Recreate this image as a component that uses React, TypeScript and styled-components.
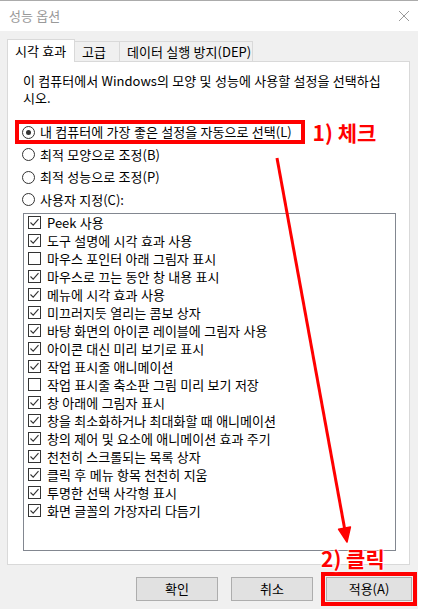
import React from 'react'
import styled, { createGlobalStyle } from 'styled-components'

const effects: { label: string; checked: boolean }[] = [
  { label: 'Peek 사용', checked: true },
  { label: '도구 설명에 시각 효과 사용', checked: true },
  { label: '마우스 포인터 아래 그림자 표시', checked: false },
  { label: '마우스로 끄는 동안 창 내용 표시', checked: true },
  { label: '메뉴에 시각 효과 사용', checked: true },
  { label: '미끄러지듯 열리는 콤보 상자', checked: true },
  { label: '바탕 화면의 아이콘 레이블에 그림자 사용', checked: true },
  { label: '아이콘 대신 미리 보기로 표시', checked: true },
  { label: '작업 표시줄 애니메이션', checked: true },
  { label: '작업 표시줄 축소판 그림 미리 보기 저장', checked: false },
  { label: '창 아래에 그림자 표시', checked: true },
  { label: '창을 최소화하거나 최대화할 때 애니메이션', checked: true },
  { label: '창의 제어 및 요소에 애니메이션 효과 주기', checked: true },
  { label: '천천히 스크롤되는 목록 상자', checked: true },
  { label: '클릭 후 메뉴 항목 천천히 지움', checked: true },
  { label: '투명한 선택 사각형 표시', checked: true },
  { label: '화면 글꼴의 가장자리 다듬기', checked: true },
]

const Radio: React.FC<{ checked?: boolean; marked?: boolean; label: string }> = ({ checked, marked, label }) => (
  <RadioRow $marked={marked}>
    <RadioCircle>{checked && <RadioDot />}</RadioCircle>
    <span>{label}</span>
  </RadioRow>
)

const Check: React.FC<{ checked: boolean; label: string }> = ({ checked, label }) => (
  <CheckRow>
    <CheckBox>
      {checked && (
        <svg width="11" height="11" viewBox="0 0 11 11">
          <path d="M1.5 5.5 L4.2 8.2 L9.5 2.2" fill="none" stroke="#333" strokeWidth="1.1" />
        </svg>
      )}
    </CheckBox>
    <span>{label}</span>
  </CheckRow>
)

const App: React.FC = () => {
  return (
    <>
      <GlobalStyle />
      <Window>
        <TitleBar>
          <Title>성능 옵션</Title>
          <svg width="10" height="10" viewBox="0 0 10 10">
            <path d="M0 0 L10 10 M10 0 L0 10" stroke="#9a9a9a" strokeWidth="1" />
          </svg>
        </TitleBar>
        <Body>
          <TabStrip>
            <Tab $active $width={68}>시각 효과</Tab>
            <Tab $width={46}>고급</Tab>
            <Tab $width={134}>데이터 실행 방지(DEP)</Tab>
          </TabStrip>
          <Panel>
            <Description>
              이 컴퓨터에서 Windows의 모양 및 성능에 사용할 설정을 선택하십
              <br />
              시오.
            </Description>
            <RadioGroup>
              <RadioLine>
                <Radio checked marked label="내 컴퓨터에 가장 좋은 설정을 자동으로 선택(L)" />
                <Note>1) 체크</Note>
              </RadioLine>
              <Radio label="최적 모양으로 조정(B)" />
              <Radio label="최적 성능으로 조정(P)" />
              <Radio label="사용자 지정(C):" />
            </RadioGroup>
            <ListBox>
              {effects.map((item) => (
                <Check key={item.label} checked={item.checked} label={item.label} />
              ))}
            </ListBox>
          </Panel>
          <ButtonRow>
            <Button $width={82}>확인</Button>
            <Button $width={82}>취소</Button>
            <Button $width={86} $marked>적용(A)</Button>
          </ButtonRow>
        </Body>
        <FloatNote>2) 클릭</FloatNote>
        <Arrow width="100" height="400" viewBox="0 0 100 400">
          <line x1="17" y1="7" x2="84.5" y2="377" stroke="#f00" strokeWidth="3" />
          <polygon points="87,391 90.4,376 78.6,378.3" fill="#f00" stroke="#f00" strokeWidth="1.5" strokeLinejoin="round" />
        </Arrow>
      </Window>
    </>
  )
}

const GlobalStyle = createGlobalStyle`
  html, body {
    margin: 0;
    padding: 0;
    background: #fff;
  }
  body {
    font-family: "Noto Sans CJK KR", "Noto Sans", sans-serif;
    font-size: 13px;
    color: #000;
    word-spacing: 0.5px;
  }
`

const Window = styled.div`
  position: relative;
  width: 418px;
  height: 609px;
  box-sizing: border-box;
  border-top: 1px solid #ababab;
  background: #f0f0f0;
  display: flex;
  flex-direction: column;
`

const TitleBar = styled.div`
  height: 30px;
  background: #fff;
  display: flex;
  align-items: center;
  justify-content: space-between;
  padding: 0 9px 0 9px;
`

const Title = styled.span`
  color: #999;
  line-height: 16px;
`

const Body = styled.div`
  padding: 8px 6px 0 7px;
  display: flex;
  flex-direction: column;
`

const TabStrip = styled.div`
  display: flex;
  align-items: flex-end;
  height: 23px;
  margin-bottom: -1px;
  position: relative;
  z-index: 1;
`

const Tab = styled.div<{ $active?: boolean; $width: number }>`
  box-sizing: border-box;
  width: ${(p) => p.$width}px;
  height: ${(p) => (p.$active ? 23 : 20)}px;
  margin-bottom: ${(p) => (p.$active ? 0 : 1)}px;
  margin-left: ${(p) => (p.$active ? 0 : -1)}px;
  padding-left: 7px;
  border: 1px solid #d9d9d9;
  border-bottom: none;
  background: ${(p) => (p.$active ? '#fff' : '#f0f0f0')};
  display: flex;
  align-items: center;
  line-height: 18px;
  white-space: nowrap;

  &:first-child {
    margin-left: 0;
  }
`

const Panel = styled.div`
  box-sizing: border-box;
  width: 403px;
  height: 504px;
  background: #fff;
  border: 1px solid #d9d9d9;
  padding: 10px 0 0 15px;
  display: flex;
  flex-direction: column;
`

const Description = styled.p`
  margin: 0;
  line-height: 17px;
  white-space: nowrap;
`

const RadioGroup = styled.div`
  margin: 17px 0 0 -1px;
  display: flex;
  flex-direction: column;
  gap: 4.67px;
`

const RadioLine = styled.div`
  display: flex;
  align-items: center;
`

const RadioRow = styled.div<{ $marked?: boolean }>`
  display: flex;
  align-items: center;
  width: fit-content;
  height: 18px;
  line-height: 18px;
  white-space: nowrap;
  ${(p) =>
    p.$marked &&
    `
    margin-left: -4px;
    padding: 0 10px 0 4px;
    outline: 4px solid #f00;
    outline-offset: -1px;
  `}
`

const RadioCircle = styled.span`
  box-sizing: border-box;
  width: 13px;
  height: 13px;
  border: 1px solid #333;
  border-radius: 50%;
  background: #fff;
  margin-right: 5px;
  display: flex;
  align-items: center;
  justify-content: center;
  flex-shrink: 0;
`

const RadioDot = styled.span`
  width: 5px;
  height: 5px;
  border-radius: 50%;
  background: #333;
`

const Note = styled.span`
  margin-left: 11px;
  color: #f00;
  font-size: 21px;
  font-weight: 700;
  line-height: 18px;
  white-space: nowrap;
  word-spacing: 0;
`

const ListBox = styled.div`
  box-sizing: border-box;
  width: 373px;
  height: 338px;
  margin-top: 4px;
  border: 1px solid #828790;
  padding: 0 0 0 4px;
  display: flex;
  flex-direction: column;
`

const CheckRow = styled.div`
  display: flex;
  align-items: center;
  height: 18px;
  line-height: 18px;
  white-space: nowrap;
`

const CheckBox = styled.span`
  box-sizing: border-box;
  width: 13px;
  height: 13px;
  border: 1px solid #333;
  background: #fff;
  margin-right: 6px;
  display: flex;
  align-items: center;
  justify-content: center;
  flex-shrink: 0;
`

const ButtonRow = styled.div`
  margin-top: 12px;
  display: flex;
  justify-content: flex-end;
  gap: 13px;
`

const Button = styled.button<{ $width: number; $marked?: boolean }>`
  box-sizing: border-box;
  width: ${(p) => p.$width}px;
  height: 24px;
  padding: 0;
  background: #e1e1e1;
  border: 1px solid #adadad;
  font-family: inherit;
  font-size: 13px;
  color: #000;
  line-height: 18px;
  ${(p) =>
    p.$marked &&
    `
    outline: 4px solid #f00;
    outline-offset: 1px;
  `}
`

const FloatNote = styled.span`
  position: absolute;
  left: 321px;
  top: 545px;
  color: #f00;
  font-size: 21px;
  font-weight: 700;
  line-height: 24px;
  white-space: nowrap;
  word-spacing: 0;
  text-shadow: 0 0 2px #fff, 0 0 2px #fff, 0 0 2px #fff, 0 0 3px #fff;
`

const Arrow = styled.svg`
  position: absolute;
  left: 260px;
  top: 150px;
  pointer-events: none;
`

export default App
